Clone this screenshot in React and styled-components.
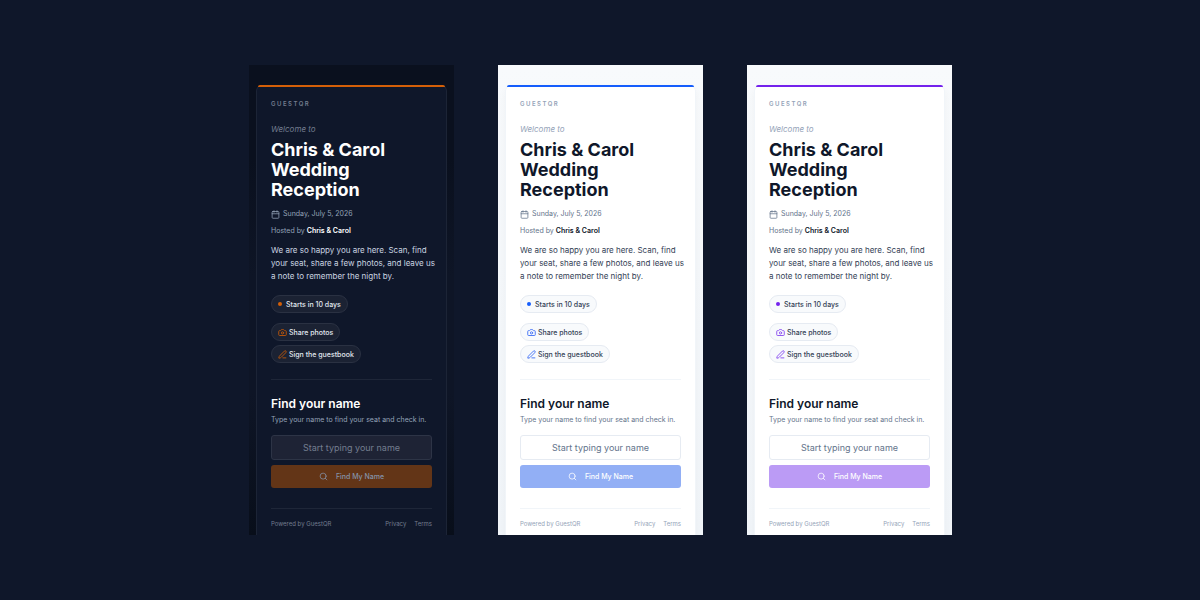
import React, { useId } from "react";
import styled, { createGlobalStyle, ThemeProvider } from "styled-components";
import { Calendar, Camera, PenLine, Search } from "lucide-react";

const GlobalStyle = createGlobalStyle`
  *, *::before, *::after { box-sizing: border-box; }
  body {
    margin: 0;
    background: #0f172a;
    font-family: Inter, "Liberation Sans", sans-serif;
  }
  h1, h2, p { margin: 0; }
`;

const light = {
  backdrop: "linear-gradient(#f8fafc, #f1f5f9)",
  card: "#ffffff",
  cardEdge: "#f1f5f9",
  shadow: "0 4px 8px rgba(15, 23, 42, 0.04)",
  faint: "#94a3b8",
  muted: "#64748b",
  strong: "#0f172a",
  body: "#334155",
  line: "#f1f5f9",
  chip: "#f8fafc",
  chipEdge: "#e6ebf2",
  chipText: "#334155",
  field: "#ffffff",
  fieldEdge: "#e6ebf2",
  placeholder: "#64748b",
  buttonText: "#ffffff",
};

const themes = [
  {
    name: "ember",
    backdrop: "linear-gradient(#0a101e, #0a101e 20%, #0e1526 45%, #0e1526 70%, #080e1a)",
    card: "#0f172a",
    cardEdge: "#1c2436",
    shadow: "none",
    faint: "#737d8f",
    muted: "#94a3b8",
    strong: "#ffffff",
    body: "#cbd5e1",
    line: "#1e2638",
    chip: "#1b2233",
    chipEdge: "#2a3142",
    chipText: "#e2e8f0",
    field: "#1e2335",
    fieldEdge: "#2d3446",
    placeholder: "#737d8f",
    accent: "#d45f08",
    icon: "#b8540c",
    button: "#633517",
    buttonText: "#8593a8",
  },
  { ...light, name: "ocean", accent: "#155dfc", icon: "#4573f5", button: "#92aff5" },
  { ...light, name: "violet", accent: "#7422ec", icon: "#8b4ff0", button: "#bb9bf5" },
];

const Stage = styled.main`
  min-height: 100vh;
  display: flex;
  flex-wrap: wrap;
  align-items: center;
  justify-content: center;
  gap: 44px;
  padding: 20px 20px 20px 21px;
`;

const Screen = styled.section`
  flex: 0 1 205px;
  padding: 20px 7px 0;
  overflow: hidden;
  background: ${({ theme }) => theme.backdrop};
`;

const Card = styled.article`
  position: relative;
  display: flex;
  flex-direction: column;
  padding: 14px 14px 5px;
  background: ${({ theme }) => theme.card};
  border: 1px solid ${({ theme }) => theme.cardEdge};
  border-bottom: 0;
  border-radius: 6px 6px 0 0;
  box-shadow: ${({ theme }) => theme.shadow};
`;

const AccentBar = styled.div`
  position: absolute;
  inset: -1px 1px auto;
  height: 2px;
  border-radius: 3px 3px 0 0;
  background: ${({ theme }) => theme.accent};
`;

const Brand = styled.p`
  font-size: 6px;
  line-height: 8px;
  font-weight: 600;
  letter-spacing: 0.25em;
  text-transform: uppercase;
  color: ${({ theme }) => theme.faint};
`;

const Welcome = styled.p`
  margin-top: 15px;
  font-size: 8px;
  line-height: 12px;
  font-style: italic;
  color: ${({ theme }) => theme.faint};
`;

const Title = styled.h1`
  margin-top: 5px;
  font-size: 18px;
  line-height: 20px;
  font-weight: 700;
  color: ${({ theme }) => theme.strong};
`;

const DateRow = styled.p`
  display: flex;
  align-items: center;
  gap: 3px;
  margin-top: 8px;
  font-size: 7px;
  line-height: 12px;
  color: ${({ theme }) => theme.muted};
`;

const Host = styled.p`
  margin-top: 5px;
  font-size: 7px;
  line-height: 12px;
  color: ${({ theme }) => theme.muted};

  strong {
    font-weight: 600;
    color: ${({ theme }) => theme.strong};
  }
`;

const Message = styled.p`
  margin-top: 7px;
  font-size: 8px;
  line-height: 13px;
  color: ${({ theme }) => theme.body};
`;

const Line = styled.span`
  display: block;
  white-space: nowrap;
`;

const Chips = styled.div`
  display: flex;
  flex-direction: column;
  align-items: flex-start;
  gap: 4px;
  margin-top: ${({ $gap }) => $gap}px;
`;

const Chip = styled.span`
  display: flex;
  align-items: center;
  gap: 2px;
  height: 18px;
  padding: 0 6px;
  font-size: 7px;
  font-weight: 500;
  white-space: nowrap;
  color: ${({ theme }) => theme.chipText};
  background: ${({ theme }) => theme.chip};
  border: 1px solid ${({ theme }) => theme.chipEdge};
  border-radius: 9px;

  svg {
    color: ${({ theme }) => theme.icon};
    stroke-width: 2.5;
  }
`;

const Dot = styled.i`
  width: 4px;
  height: 4px;
  margin-right: 2px;
  border-radius: 50%;
  background: ${({ theme }) => theme.accent};
`;

const Finder = styled.form`
  display: flex;
  flex-direction: column;
  margin-top: 16px;
  padding-top: 16px;
  border-top: 1px solid ${({ theme }) => theme.line};
`;

const FinderTitle = styled.h2`
  font-size: 12px;
  line-height: 16px;
  font-weight: 600;
  color: ${({ theme }) => theme.strong};
`;

const Hint = styled.label`
  margin-top: 2px;
  font-size: 7px;
  line-height: 12px;
  white-space: nowrap;
  color: ${({ theme }) => theme.muted};
`;

const NameInput = styled.input`
  width: 100%;
  height: 25px;
  margin-top: 9px;
  padding: 0 8px 1px;
  font: inherit;
  font-size: 9px;
  text-align: center;
  color: ${({ theme }) => theme.strong};
  background: ${({ theme }) => theme.field};
  border: 1px solid ${({ theme }) => theme.fieldEdge};
  border-radius: 3px;

  &::placeholder {
    color: ${({ theme }) => theme.placeholder};
    opacity: 1;
  }
`;

const FindButton = styled.button`
  display: flex;
  align-items: center;
  justify-content: center;
  gap: 8px;
  height: 23px;
  margin-top: 5px;
  padding: 0;
  font: inherit;
  font-size: 7px;
  font-weight: 500;
  color: ${({ theme }) => theme.buttonText};
  background: ${({ theme }) => theme.button};
  border: 0;
  border-radius: 3px;
`;

const Footer = styled.footer`
  display: flex;
  justify-content: space-between;
  margin-top: 20px;
  padding-top: 9px;
  font-size: 6px;
  line-height: 12px;
  color: ${({ theme }) => theme.faint};
  border-top: 1px solid ${({ theme }) => theme.line};
`;

const FooterLinks = styled.nav`
  display: flex;
  gap: 8px;
`;

const FooterLink = styled.a`
  color: inherit;
  text-decoration: none;
`;

function WelcomeScreen() {
  const fieldId = useId();
  return (
    <Screen>
      <Card>
        <AccentBar />
        <Brand>GuestQR</Brand>
        <Welcome>Welcome to</Welcome>
        <Title>
          <Line>Chris &amp; Carol</Line>
          <Line>Wedding</Line>
          <Line>Reception</Line>
        </Title>
        <DateRow>
          <Calendar size={9} />
          Sunday, July 5, 2026
        </DateRow>
        <Host>
          Hosted by <strong>Chris &amp; Carol</strong>
        </Host>
        <Message>
          <Line>We are so happy you are here. Scan, find</Line>
          <Line>your seat, share a few photos, and leave us</Line>
          <Line>a note to remember the night by.</Line>
        </Message>
        <Chips $gap={12}>
          <Chip>
            <Dot />
            Starts in 10 days
          </Chip>
        </Chips>
        <Chips $gap={10}>
          <Chip>
            <Camera size={9} />
            Share photos
          </Chip>
          <Chip>
            <PenLine size={9} />
            Sign the guestbook
          </Chip>
        </Chips>
        <Finder onSubmit={(event) => event.preventDefault()}>
          <FinderTitle>Find your name</FinderTitle>
          <Hint htmlFor={fieldId}>Type your name to find your seat and check in.</Hint>
          <NameInput id={fieldId} type="text" placeholder="Start typing your name" />
          <FindButton type="submit">
            <Search size={9} />
            Find My Name
          </FindButton>
        </Finder>
        <Footer>
          <span>Powered by GuestQR</span>
          <FooterLinks>
            <FooterLink href="#privacy">Privacy</FooterLink>
            <FooterLink href="#terms">Terms</FooterLink>
          </FooterLinks>
        </Footer>
      </Card>
    </Screen>
  );
}

export default function App() {
  return (
    <>
      <GlobalStyle />
      <Stage>
        {themes.map((theme) => (
          <ThemeProvider key={theme.name} theme={theme}>
            <WelcomeScreen />
          </ThemeProvider>
        ))}
      </Stage>
    </>
  );
}
